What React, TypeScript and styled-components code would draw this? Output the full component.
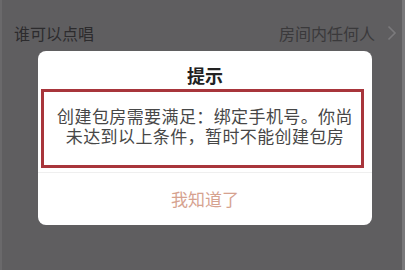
import React from "react";
import styled, { createGlobalStyle } from "styled-components";

const Global = createGlobalStyle`
  html, body { margin: 0; padding: 0; background: #5f5e60; }
  body { font-family: "Noto Sans CJK SC", "Noto Sans", sans-serif; }
`;

const Screen = styled.div`
  width: 405px;
  height: 270px;
  box-sizing: border-box;
  background: #5f5e60;
  border-left: 2px solid #6a696b;
  border-right: 3px solid #79787a;
  display: flex;
  flex-direction: column;
  overflow: hidden;
`;

const Row = styled.div`
  height: 51px;
  box-sizing: border-box;
  padding: 21px 5px 0 12px;
  display: flex;
  align-items: flex-start;
  justify-content: space-between;
`;

const RowLabel = styled.span`
  font-size: 16px;
  line-height: 24px;
  color: #2c2b2d;
`;

const RowValue = styled.span`
  display: flex;
  align-items: center;
  gap: 12px;
  font-size: 16px;
  line-height: 24px;
  color: #3a393b;
`;

const Dialog = styled.div`
  margin-left: 36px;
  width: 334px;
  height: 174px;
  background: #ffffff;
  border-radius: 8px;
  display: flex;
  flex-direction: column;
`;

const Title = styled.div`
  padding-top: 12px;
  height: 24px;
  line-height: 24px;
  text-align: center;
  font-size: 18px;
  font-weight: 700;
  color: #222222;
`;

const Highlight = styled.div`
  margin: 2px 0 0 3px;
  width: 323px;
  height: 79px;
  box-sizing: border-box;
  border: 3px solid #a8353b;
  padding: 14px 0 0 5px;
  text-align: center;
`;

const Message = styled.p`
  margin: 0;
  font-size: 17px;
  line-height: 20px;
  letter-spacing: 0.4px;
  color: #474747;
`;

const Divider = styled.div`
  margin-top: 4px;
  height: 1px;
  background: #efefef;
`;

const Action = styled.button`
  flex: 1;
  border: none;
  background: transparent;
  font-family: inherit;
  font-size: 17px;
  color: #d6a28f;
  padding: 0 0 2px;
`;

const Chevron = () => (
  <svg width="10" height="16" viewBox="0 0 10 16">
    <path d="M1.5 1.5 L8 8 L1.5 14.5" fill="none" stroke="#7b7a7c" strokeWidth="1.6" />
  </svg>
);

export default function App() {
  return (
    <>
      <Global />
      <Screen>
        <Row>
          <RowLabel>谁可以点唱</RowLabel>
          <RowValue>
            房间内任何人
            <Chevron />
          </RowValue>
        </Row>
        <Dialog>
          <Title>提示</Title>
          <Highlight>
            <Message>
              创建包房需要满足：绑定手机号。你尚
              <br />
              未达到以上条件，暂时不能创建包房
            </Message>
          </Highlight>
          <Divider />
          <Action>我知道了</Action>
        </Dialog>
      </Screen>
    </>
  );
}
